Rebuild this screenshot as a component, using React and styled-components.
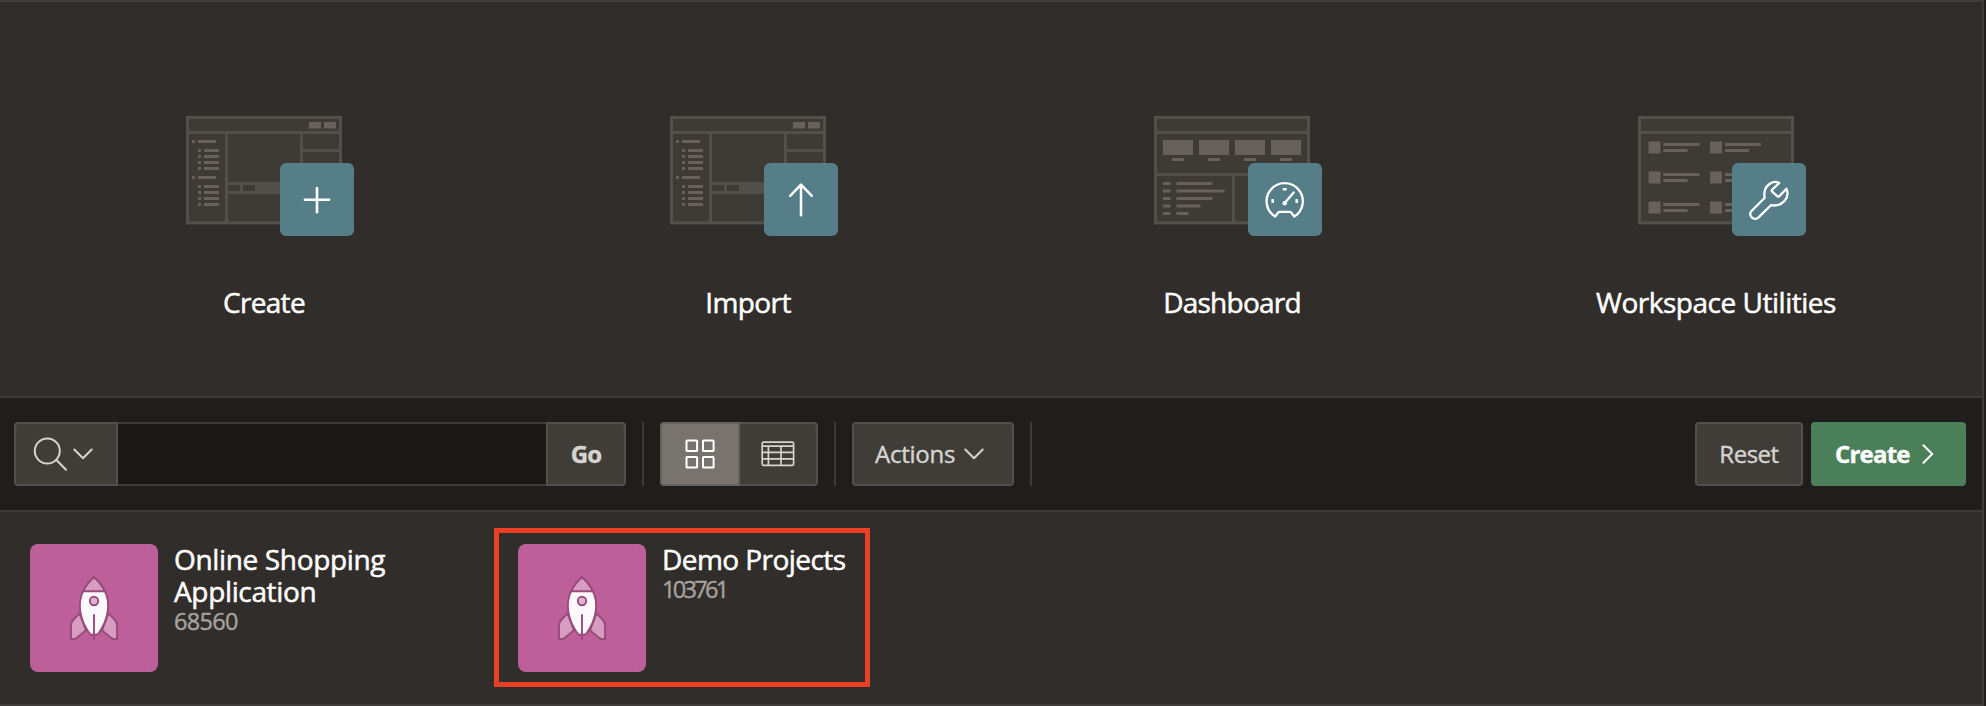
import React from "react";
import styled, { createGlobalStyle } from "styled-components";

const GlobalStyle = createGlobalStyle`
  * { box-sizing: border-box; }
  body { margin: 0; background: #201e1c; font-family: "Open Sans", "Noto Sans", sans-serif; }
  button, input { font-family: inherit; }
`;

const Page = styled.div`
  width: 1984px;
  height: 706px;
  border-top: 2px solid #3f3c39;
  border-bottom: 2px solid #3f3c39;
  background: #312d2a;
  display: flex;
  flex-direction: column;
  border-right: 2px solid #3d3b37;
`;

const Hero = styled.section`
  height: 394px;
  padding: 114.33px 24px 0 22px;
  display: grid;
  grid-template-columns: repeat(4, 484px);
`;

const Tile = styled.a`
  display: flex;
  flex-direction: column;
  align-items: center;
`;

const Art = styled.div`
  position: relative;
  width: 156px;
  height: 120px;
`;

const Badge = styled.div`
  position: absolute;
  left: 94px;
  top: 46.67px;
  width: 74px;
  height: 73.5px;
  border-radius: 6px;
  background: #567e89;
  svg { display: block; }
`;

const TileLabel = styled.span`
  margin-top: 47px;
  font-size: 28px;
  line-height: 38px;
  color: #fff;
  -webkit-text-stroke: 0.5px #fff;
  white-space: nowrap;
  letter-spacing: ${(p) => p.$track}px;
`;

const Toolbar = styled.div`
  height: 116px;
  padding: 0 16px 0 14px;
  display: flex;
  align-items: center;
  background: #201e1c;
  border-top: 2px solid #3d3b36;
  border-bottom: 2px solid #3d3b36;
`;

const Button = styled.button`
  width: ${(p) => p.$w}px;
  height: 64px;
  padding: 0 ${(p) => p.$pad || 0}px;
  display: flex;
  align-items: center;
  justify-content: ${(p) => (p.$pad ? "flex-start" : "center")};
  gap: ${(p) => p.$gap || 0}px;
  border: 2px solid ${(p) => (p.$tone === "hot" ? "#4b7f5a" : p.$tone === "active" ? "#67625e" : "#544f4a")};
  border-left-width: ${(p) => (p.$joined ? 0 : 2)}px;
  border-radius: ${(p) => p.$radius || "4px"};
  background: ${(p) =>
    p.$tone === "hot" ? "#4b7f5a" : p.$tone === "active" ? "#79736e" : "#403c38"};
  color: ${(p) => (p.$tone ? "#fff" : "#d6d4d1")};
  font-size: 24px;
  line-height: 32px;
  font-weight: ${(p) => (p.$bold ? 700 : 400)};
  -webkit-text-stroke: 0.4px currentColor;
  letter-spacing: ${(p) => p.$track || 0}px;
  white-space: nowrap;
  svg { flex: none; display: block; }
`;

const SearchInput = styled.input`
  width: 428px;
  height: 64px;
  border: solid #3d3b36;
  border-width: 2px 0;
  border-radius: 0;
  padding: 0 16px;
  outline: none;
  background: #191815;
  color: #fff;
  font-size: 24px;
`;

const Divider = styled.span`
  width: 2px;
  height: 64px;
  margin: 0 16px;
  background: #3d3b36;
`;

const Actions = styled.div`
  margin-left: auto;
  display: flex;
  gap: 8px;
`;

const Apps = styled.section`
  flex: 1;
  padding: 32px 0 0 30px;
  display: grid;
  grid-template-columns: repeat(4, 488px);
`;

const AppCard = styled.article`
  position: relative;
  display: flex;
  align-items: flex-start;
  gap: 16px;
`;

const AppIcon = styled.div`
  width: 128px;
  height: 128px;
  border-radius: 8px;
  background: #bd5f99;
  svg { display: block; }
`;

const AppText = styled.div`
  display: flex;
  flex-direction: column;
  width: 240px;
  margin-top: -1.5px;
`;

const AppName = styled.span`
  font-size: 28px;
  line-height: 32px;
  color: #fff;
  -webkit-text-stroke: 0.5px #fff;
  letter-spacing: ${(p) => p.$track}px;
`;

const AppId = styled.span`
  font-size: 23.5px;
  line-height: 28px;
  color: #a5a29f;
  -webkit-text-stroke: 0.4px #a5a29f;
  letter-spacing: ${(p) => p.$track}px;
`;

const Highlight = styled.div`
  position: absolute;
  left: -24px;
  top: -16px;
  width: 376px;
  height: 159px;
  border: 5px solid #ea4025;
`;

const LINE = "#534f4a";
const BLOCK = "#66615d";

function Frame({ children }) {
  return (
    <svg width="156" height="109" viewBox="0 0 156 109" style={{ display: "block" }}>
      <rect x="1.5" y="1.5" width="153" height="105.5" fill="#3e3a36" stroke={LINE} strokeWidth="3" />
      <rect x="3" y="15" width="150" height="3" fill={LINE} />
      {children}
    </svg>
  );
}

function BuilderArt() {
  return (
    <Frame>
      <g fill={LINE}>
        <rect x="39" y="18" width="3" height="88" />
        <rect x="114" y="18" width="3" height="50" />
        <rect x="117" y="33" width="36" height="3" />
        <rect x="42" y="66" width="72" height="12" />
      </g>
      <g fill="#3e3a36">
        <rect x="42" y="69" width="12" height="6" />
        <rect x="57" y="69" width="12" height="6" />
      </g>
      <g fill={BLOCK}>
        <rect x="123" y="6" width="12" height="6.5" />
        <rect x="138" y="6" width="12" height="6.5" />
        {[24, 60].map((y) => (
          <g key={y}>
            <rect x="6" y={y} width="3" height="3" />
            <rect x="12" y={y} width="18" height="3" />
            {[9, 15, 21, 27].map((d) => (
              <g key={d}>
                <rect x="12" y={y + d} width="3" height="3" />
                <rect x="18" y={y + d} width="15" height="3" />
              </g>
            ))}
          </g>
        ))}
      </g>
    </Frame>
  );
}

function DashboardArt() {
  return (
    <Frame>
      <g fill={LINE}>
        <rect x="3" y="57" width="150" height="3" />
        <rect x="78" y="60" width="3" height="46" />
      </g>
      <g fill={BLOCK}>
        {[9, 45, 81, 117].map((x) => (
          <g key={x}>
            <rect x={x} y="24" width="30" height="15" />
            <rect x={x + 9} y="42" width="12" height="3" />
          </g>
        ))}
        {[36, 48, 36, 24, 12].map((w, i) => (
          <g key={i}>
            <rect x="9" y={66 + i * 7.5} width="7.5" height="3" />
            <rect x="22.5" y={66 + i * 7.5} width={w} height="3" />
          </g>
        ))}
      </g>
    </Frame>
  );
}

function UtilitiesArt() {
  return (
    <Frame>
      <g fill={BLOCK}>
        {[25.5, 55.5, 85.5].map((y) => (
          <g key={y}>
            <rect x="10.5" y={y} width="12" height="12" />
            <rect x="25.3" y={y + 1.5} width="36.2" height="3" />
            <rect x="25.3" y={y + 7.5} width="24.2" height="3" />
            <rect x="72" y={y} width="12" height="12" />
            <rect x="87" y={y + 1.5} width="36" height="3" />
            <rect x="87" y={y + 7.5} width="24" height="3" />
          </g>
        ))}
      </g>
    </Frame>
  );
}

function BadgeIcon({ children }) {
  return (
    <svg width="73.5" height="73.5" viewBox="0 0 73.5 73.5" fill="none" stroke="#fff" strokeWidth="2.3" strokeLinecap="round" strokeLinejoin="round">
      {children}
    </svg>
  );
}

const PlusGlyph = <path strokeWidth="2.6" d="M37 25v24.2M24.9 36.8h24.2" />;
const UpGlyph = <path strokeWidth="2.5" d="M37 52.3V21.8M26.2 32.8 37 21.6l10.8 11.2" />;
const GaugeGlyph = (
  <>
    <path d="M27.1 53.6A18.1 18.1 0 1 1 46.3 53.6L43.3 49.6Q42.6 48.9 41.6 48.9H31.8Q30.8 48.9 30.1 49.6Z" />
    <path d="M36.7 40 45.7 29.4" />
    <circle cx="36.7" cy="40.2" r="2.2" fill="#fff" stroke="none" />
    <g fill="#fff" stroke="none">
      <rect x="34.7" y="25" width="4" height="2.6" rx=".6" />
      <rect x="23.4" y="36" width="2.6" height="4" rx=".6" />
      <rect x="47.4" y="36" width="2.6" height="4" rx=".6" />
    </g>
  </>
);
const WrenchGlyph = (
  <path d="M47.2 20C41 16.5 30.5 22.5 32.6 35L19.7 47.7C15.2 52.3 22 58.7 26.6 54.4L38.9 42.2C50.5 44.2 58.3 34.5 54.4 25.8L47.4 33.1Q46.3 34.2 45.2 33.1L40.2 28.6Q39.3 27.6 40.2 26.6Z" />
);

const tiles = [
  { label: "Create", track: -0.7, art: <BuilderArt />, glyph: PlusGlyph },
  { label: "Import", track: -0.6, art: <BuilderArt />, glyph: UpGlyph },
  { label: "Dashboard", track: -0.75, art: <DashboardArt />, glyph: GaugeGlyph },
  { label: "Workspace Utilities", track: -0.48, art: <UtilitiesArt />, glyph: WrenchGlyph },
];

const apps = [
  { name: "Online Shopping Application", track: -0.35, id: "68560", idTrack: -0.7 },
  { name: "Demo Projects", track: -0.55, id: "103761", idTrack: -2.7, highlighted: true },
];

const Chevron = () => (
  <svg width="20" height="12" viewBox="0 0 20 12" fill="none" stroke="currentColor" strokeWidth="2" strokeLinecap="round" strokeLinejoin="round">
    <path d="M1.3 1.5 10 10.2l8.7-8.7" />
  </svg>
);

const SearchIcon = () => (
  <svg width="34" height="34" viewBox="0 0 34 34" fill="none" stroke="currentColor" strokeWidth="2" strokeLinecap="round">
    <circle cx="14.3" cy="14" r="12.5" />
    <path d="m23.2 22.8 9.8 9.9" />
  </svg>
);

const GridIcon = () => (
  <svg width="30" height="30" viewBox="0 0 30 30" fill="none" stroke="currentColor" strokeWidth="2">
    {[1.5, 18].map((x) => [1.5, 18].map((y) => <rect key={`${x}-${y}`} x={x} y={y} width="10.6" height="10.6" rx=".6" />))}
  </svg>
);

const TableIcon = () => (
  <svg width="34" height="26" viewBox="0 0 34 26" fill="none" stroke="currentColor" strokeWidth="1.7">
    <rect x="1.2" y="1.2" width="31.4" height="23.2" rx="1.5" />
    <path d="M1.2 5.2h31.4M1.2 11.4h31.4M1.2 17.9h31.4M7.4 5.2v19M20 5.2v19" />
  </svg>
);

const NextIcon = () => (
  <svg width="12" height="20" viewBox="0 0 12 20" fill="none" stroke="currentColor" strokeWidth="2" strokeLinecap="round" strokeLinejoin="round">
    <path d="m1.5 1.3 8.7 8.7-8.7 8.7" />
  </svg>
);

const Rocket = () => (
  <svg width="128" height="128" viewBox="0 0 128 128" stroke="#984b7d" strokeWidth="1.9">
    <path fill="#d69dc1" d="M49.5 69.5 44 75Q41 78 41 82V95H43.5Q45.5 95 47 93.7L56 86.3ZM78.5 69.5 84 75Q87 78 87 82V95H84.5Q82.5 95 81 93.7L72 86.3Z" />
    <path fill="#fcf8fb" d="M64 33.3Q57 39.3 53 47.3C47.5 59 49 74 59 88.7Q60.3 90.8 62 90.8H66Q67.7 90.8 69 88.7C79 74 80.5 59 75 47.3Q71 39.3 64 33.3Z" />
    <path fill="#d69dc1" d="M64 33.3Q57 39.3 53.2 47.2H74.8Q71 39.3 64 33.3Z" />
    <circle cx="64" cy="57" r="4.2" fill="#dfb3cf" />
    <path fill="none" d="M64 70.3V95.7" />
  </svg>
);

export default function App() {
  return (
    <>
      <GlobalStyle />
      <Page>
        <Hero>
          {tiles.map((t) => (
            <Tile key={t.label}>
              <Art>
                {t.art}
                <Badge>
                  <BadgeIcon>{t.glyph}</BadgeIcon>
                </Badge>
              </Art>
              <TileLabel $track={t.track}>{t.label}</TileLabel>
            </Tile>
          ))}
        </Hero>
        <Toolbar>
          <Button $w={104} $pad={17} $gap={6} $radius="4px 0 0 4px" aria-label="Search columns">
            <SearchIcon />
            <Chevron />
          </Button>
          <SearchInput aria-label="Search" />
          <Button $w={80} $bold $track={-0.8} $radius="0 4px 4px 0">Go</Button>
          <Divider />
          <Button $w={80} $tone="active" $radius="4px 0 0 4px" aria-label="View icons">
            <GridIcon />
          </Button>
          <Button $w={78} $joined $radius="0 4px 4px 0" aria-label="View report">
            <TableIcon />
          </Button>
          <Divider />
          <Button $w={162} $pad={21} $gap={8.5} $track={-0.25}>
            Actions
            <Chevron />
          </Button>
          <Divider />
          <Actions>
            <Button $w={108} $track={-0.5}>Reset</Button>
            <Button $w={155} $pad={22} $gap={12} $tone="hot" $bold $track={-0.8}>
              Create
              <NextIcon />
            </Button>
          </Actions>
        </Toolbar>
        <Apps>
          {apps.map((a) => (
            <AppCard key={a.id}>
              <AppIcon>
                <Rocket />
              </AppIcon>
              <AppText>
                <AppName $track={a.track}>{a.name}</AppName>
                <AppId $track={a.idTrack}>{a.id}</AppId>
              </AppText>
              {a.highlighted && <Highlight />}
            </AppCard>
          ))}
        </Apps>
      </Page>
    </>
  );
}
